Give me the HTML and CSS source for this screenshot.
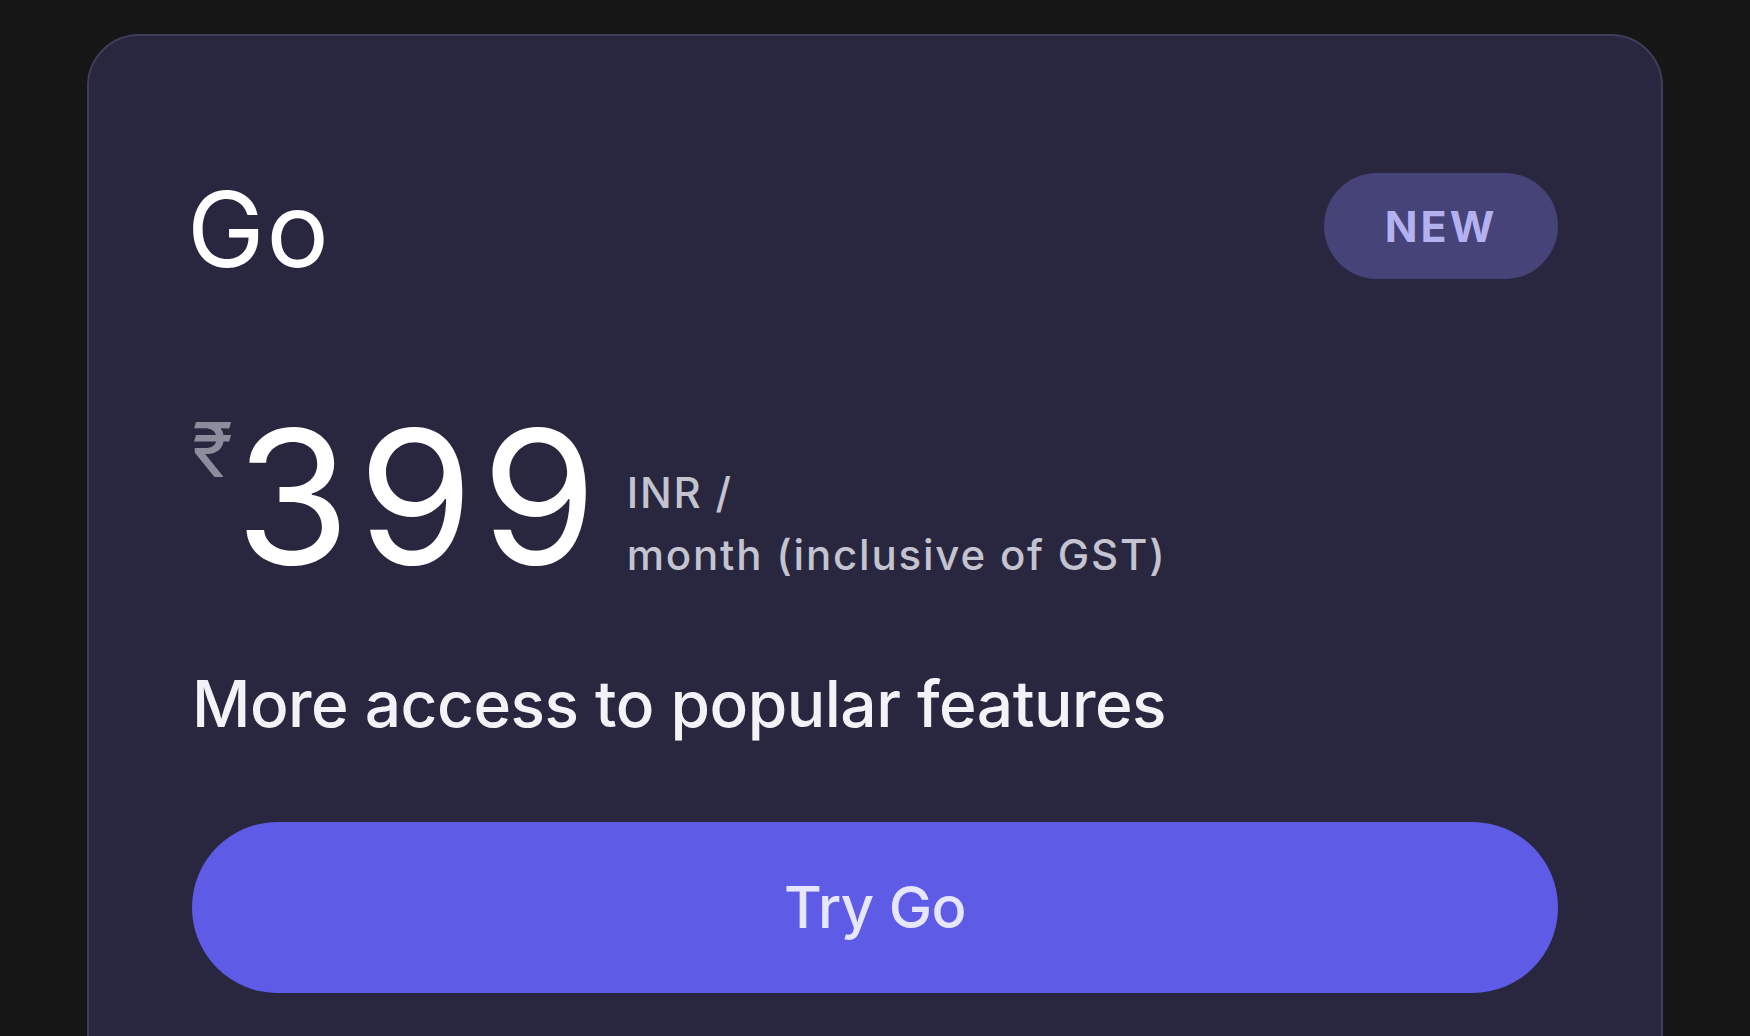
FILE: index.html
```html
<!DOCTYPE html>
<html lang="en">
<head>
    <meta charset="UTF-8">
    <meta name="viewport" content="width=device-width, initial-scale=1.0">
    <title>Go plan</title>
    <link rel="stylesheet" href="styles.css">
</head>
<body>

    <div class="plan-card">
        <div class="plan-head">
            <div class="plan-name">Go</div>
            <div class="badge">NEW</div>
        </div>

        <div class="price-row">
            <span class="currency">₹</span>
            <span class="amount">399</span>
            <div class="period">
                <div>INR /</div>
                <div>month (inclusive of GST)</div>
            </div>
        </div>

        <div class="tagline">More access to popular features</div>

        <button class="try-btn">Try Go</button>
    </div>

</body>
</html>
```

FILE: styles.css
```css
body {
    margin: 0;
    height: 100vh;
    background-color: #161616;
    font-family: "Inter", "Noto Sans", sans-serif;
    color: white;
    overflow: hidden;
}

.plan-card {
    margin: 34px 0 0 87px;
    width: 1576px;
    height: 1100px;
    box-sizing: border-box;
    padding: 137px 103px 0 103px;
    background-color: #28273f;
    border: 2px solid #3e3d5a;
    border-radius: 52px;
}

.plan-head {
    display: flex;
    justify-content: space-between;
    align-items: center;
    height: 106px;
}

.plan-name {
    font-size: 104px;
    line-height: 1;
    font-weight: 400;
    letter-spacing: 2px;
    margin-left: -5px;
    margin-top: 6px;
}

.badge {
    width: 234px;
    height: 106px;
    border-radius: 53px;
    background-color: #464379;
    color: #b4b1f0;
    font-size: 43px;
    font-weight: 700;
    letter-spacing: 3px;
    display: flex;
    justify-content: center;
    align-items: center;
}

.price-row {
    display: flex;
    align-items: flex-end;
    margin-top: 125px;
}

.currency {
    align-self: flex-start;
    font-size: 76px;
    line-height: 1;
    color: #8d8c9c;
    margin-top: 7px;
}

.amount {
    font-size: 186px;
    line-height: 1;
    font-weight: 400;
    letter-spacing: 8px;
    margin-left: 2px;
}

.period {
    margin-left: 22px;
    padding-bottom: 4px;
    font-size: 42px;
    line-height: 62px;
    font-weight: 500;
    letter-spacing: 1.8px;
    color: #c4c3d0;
}

.tagline {
    margin-top: 76px;
    font-size: 64px;
    line-height: 1.2;
    font-weight: 500;
    letter-spacing: -0.5px;
    color: #f2f2f7;
}

.try-btn {
    display: block;
    width: 100%;
    height: 171px;
    margin-top: 79px;
    border: none;
    border-radius: 86px;
    background-color: #5e5ce6;
    color: #e6e6ff;
    font-family: inherit;
    font-size: 58px;
    font-weight: 500;
    letter-spacing: -0.5px;
    cursor: pointer;
}
```
